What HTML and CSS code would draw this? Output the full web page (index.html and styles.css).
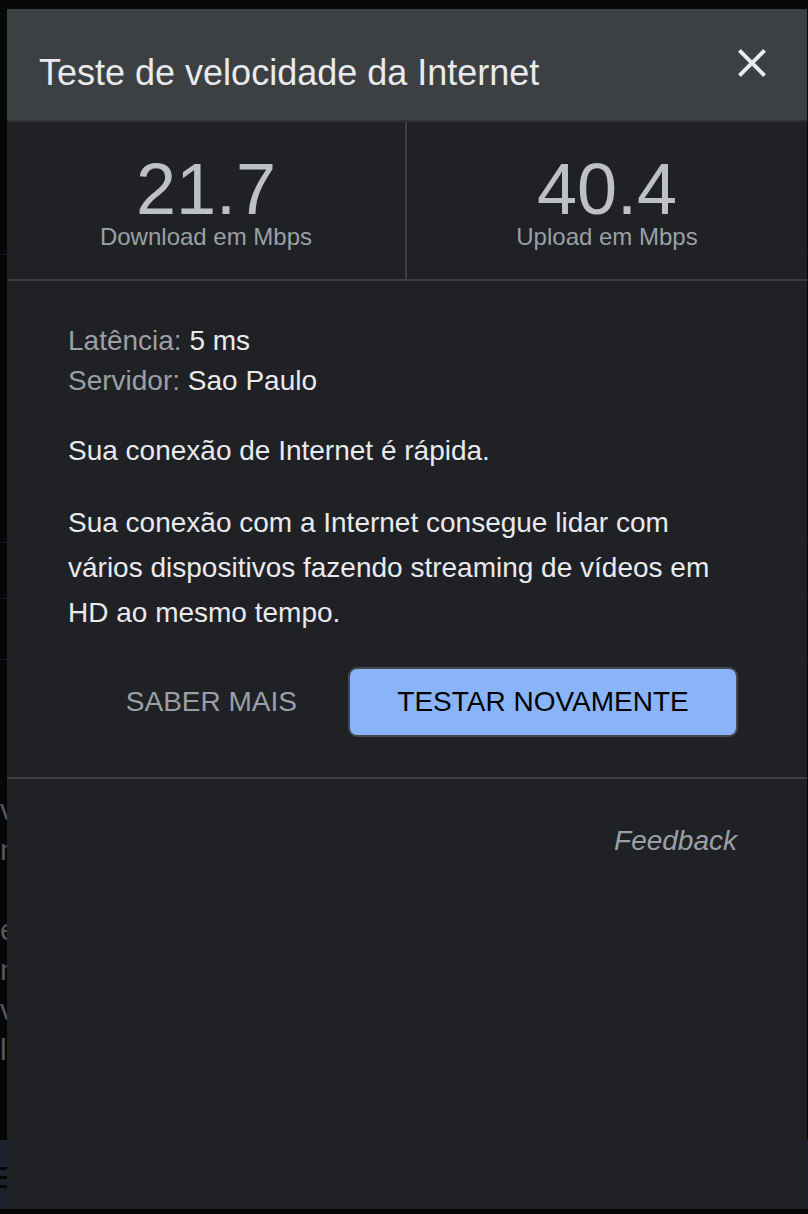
FILE: index.html
```html
<!DOCTYPE html>
<html lang="pt-BR">
<head>
<meta charset="utf-8">
<title>Teste de velocidade da Internet</title>
<link rel="stylesheet" href="styles.css">
</head>
<body>
<div class="page">
  <div class="page-row r1"></div>
  <div class="page-row r2"></div>
  <div class="page-row r3"></div>
  <div class="page-row r4"></div>
  <div class="page-text">
    <p>vo</p>
    <p>nn</p>
    <p>&nbsp;</p>
    <p>ee</p>
    <p>nn</p>
    <p>vv</p>
    <p>ld</p>
  </div>
  <div class="page-bar">
    <span></span><span></span><span></span>
  </div>
</div>

<div class="dialog" role="dialog" aria-label="Teste de velocidade da Internet">
  <header class="dialog-header">
    <h1 class="dialog-title">Teste de velocidade da Internet</h1>
    <button class="close-btn" aria-label="Fechar">
      <svg viewBox="0 0 24 24" width="48" height="48" aria-hidden="true">
        <path d="M19 6.41L17.59 5 12 10.59 6.41 5 5 6.41 10.59 12 5 17.59 6.41 19 12 13.41 17.59 19 19 17.59 13.41 12z" fill="#e8eaed"/>
      </svg>
    </button>
  </header>

  <section class="stats">
    <div class="stat">
      <div class="stat-value">21.7</div>
      <div class="stat-label">Download em Mbps</div>
    </div>
    <div class="stat">
      <div class="stat-value">40.4</div>
      <div class="stat-label">Upload em Mbps</div>
    </div>
  </section>

  <section class="details">
    <div class="meta">
      <div><span class="meta-key">Latência:</span> <span class="meta-val">5 ms</span></div>
      <div><span class="meta-key">Servidor:</span> <span class="meta-val">Sao Paulo</span></div>
    </div>
    <p class="para">Sua conexão de Internet é rápida.</p>
    <p class="para">Sua conexão com a Internet consegue lidar com vários dispositivos fazendo streaming de vídeos em HD ao mesmo tempo.</p>
    <div class="actions">
      <button class="btn-text">SABER MAIS</button>
      <button class="btn-primary">TESTAR NOVAMENTE</button>
    </div>
  </section>

  <footer class="dialog-footer">
    <a class="feedback" href="#">Feedback</a>
  </footer>
</div>
</body>
</html>
```

FILE: styles.css
```css
* {
  box-sizing: border-box;
}

html, body {
  margin: 0;
  padding: 0;
}

body {
  width: 808px;
  height: 1214px;
  overflow: hidden;
  background: #050807;
  font-family: "Liberation Sans", Arial, Helvetica, sans-serif;
  position: relative;
}

/* background page under the dialog */
.page {
  width: 808px;
  height: 1214px;
  display: flex;
  flex-direction: column;
}

.page-row {
  border-bottom: 1px solid #15181a;
}
.r1 { height: 255px; }
.r2 { height: 288px; }
.r3 { height: 56px; }
.r4 { height: 61px; }

.page-text {
  margin-top: 130px;
  font-size: 30px;
  line-height: 40px;
  color: #55595d;
}

.page-text p {
  margin: 0;
  white-space: nowrap;
}

.page-bar {
  margin-top: 70px;
  height: 69px;
  background: #1c2130;
  display: flex;
  flex-direction: column;
  justify-content: center;
  gap: 6px;
  padding-top: 6px;
}

.page-bar span {
  display: block;
  width: 8px;
  height: 3px;
  background: #050807;
}

/* dialog */
.dialog {
  position: absolute;
  left: 7px;
  top: 9px;
  width: 800px;
  height: 1200px;
  background: #202124;
  display: flex;
  flex-direction: column;
}

.dialog-header {
  height: 113px;
  background: #3c4043;
  border-bottom: 2px solid #303134;
  display: flex;
  justify-content: space-between;
  align-items: flex-start;
  padding: 0 31px 0 32px;
}

.dialog-title {
  margin: 44px 0 0;
  font-size: 36px;
  line-height: 40px;
  font-weight: 400;
  color: #e8eaed;
}

.close-btn {
  margin-top: 30px;
  padding: 0;
  border: 0;
  background: transparent;
  width: 48px;
  height: 48px;
  display: flex;
  cursor: pointer;
}

.stats {
  display: grid;
  grid-template-columns: 1fr 1fr;
  height: 159px;
  border-bottom: 2px solid #3c4043;
}

.stat {
  display: flex;
  flex-direction: column;
  align-items: center;
  padding-top: 31px;
}

.stat:first-child {
  border-right: 2px solid #3c4043;
}

.stat-value {
  font-size: 72px;
  line-height: 72px;
  color: #bdc1c6;
}

.stat-label {
  font-size: 24px;
  line-height: 24px;
  color: #9aa0a6;
}

.details {
  padding: 40px 69px 40px 61px;
  border-bottom: 2px solid #3c4043;
}

.meta {
  font-size: 28px;
  line-height: 40px;
}

.meta-key {
  color: #9aa0a6;
}

.meta-val {
  color: #e8eaed;
}

.para {
  margin: 27px 0 0;
  font-size: 28px;
  line-height: 45px;
  color: #e8eaed;
}

.actions {
  margin-top: 32px;
  display: flex;
  justify-content: flex-end;
  align-items: center;
  gap: 27px;
}

.btn-text {
  font-family: inherit;
  font-size: 28px;
  color: #9aa0a6;
  background: transparent;
  border: 0;
  padding: 0 24px;
  height: 70px;
}

.btn-primary {
  font-family: inherit;
  font-size: 28px;
  color: #000000;
  background: #8ab4f8;
  border: 2px solid #45484c;
  border-radius: 9px;
  width: 390px;
  height: 70px;
  padding: 0;
}

.dialog-footer {
  display: flex;
  justify-content: flex-end;
  padding: 42px 70px 0 0;
}

.feedback {
  font-size: 28px;
  line-height: 40px;
  font-style: italic;
  color: #9aa0a6;
  text-decoration: none;
}
```
